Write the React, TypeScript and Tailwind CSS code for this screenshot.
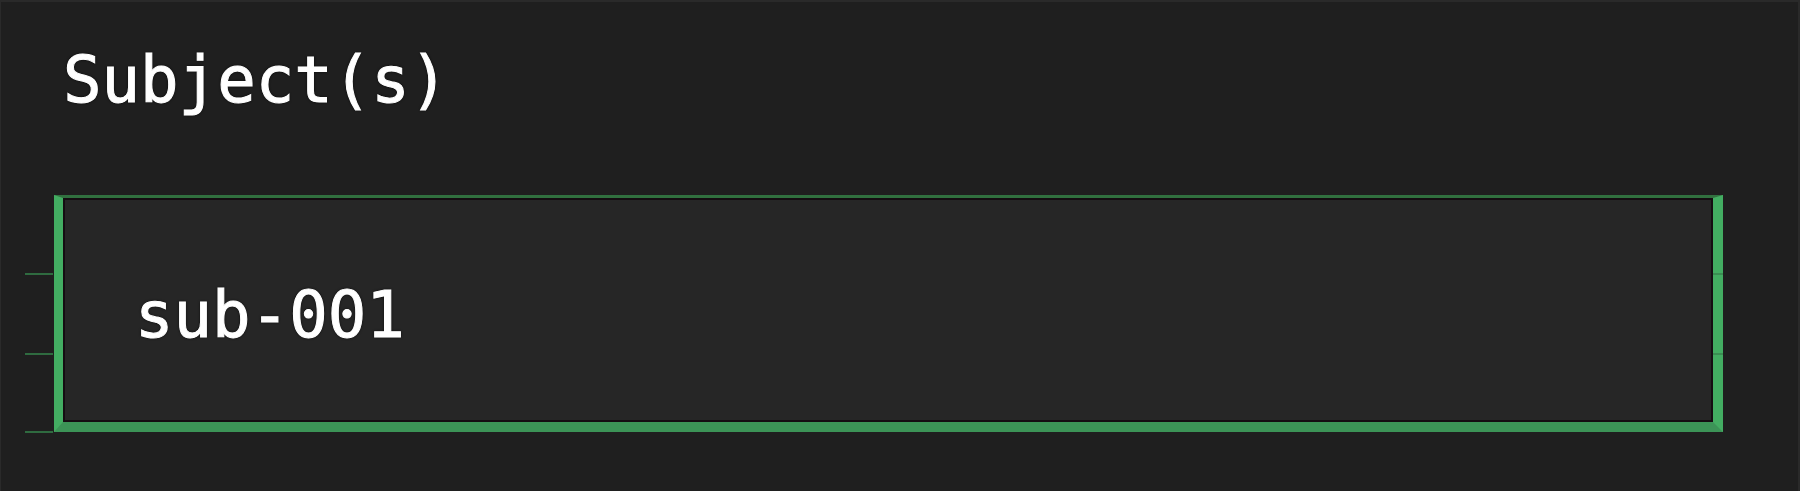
export default function App() {
  return (
    <div className="w-full h-[491px] bg-[#1f1f1f] border-t-2 border-l border-r-2 border-[#2a2a2a] font-['DejaVu_Sans_Mono',monospace] text-white overflow-hidden">
      {/* Label */}
      <div className="pt-[46px] pl-[62px] text-[64px] leading-none [-webkit-text-stroke:1px_white] [text-shadow:0_0_3px_#000]">
        Subject(s)
      </div>

      {/* Field */}
      <div className="relative mt-[83px] ml-[53px] w-[1669px] h-[237px] border-t-[3px] border-l-[9px] border-r-[10px] border-b-[10px] border-t-[#31703f] border-l-[#43ad62] border-r-[#43ad62] border-b-[#3c9457]">
        <div className="h-full border-2 border-[#150d12] bg-[#262626] pt-[83px] pl-[70px] text-[64px] leading-none [-webkit-text-stroke:1px_white] [text-shadow:0_0_3px_#000]">
          sub-001
        </div>

        {/* focus ticks */}
        <span className="absolute left-[-38px] top-[75px] w-[28px] h-[2px] bg-[#2f6b40]" />
        <span className="absolute left-[-38px] top-[155px] w-[28px] h-[2px] bg-[#2f6b40]" />
        <span className="absolute left-[-38px] top-[233px] w-[28px] h-[2px] bg-[#2f6b40]" />
        <span className="absolute right-[-10px] top-[75px] w-[10px] h-[2px] bg-[#3a8e52]" />
        <span className="absolute right-[-10px] top-[155px] w-[10px] h-[2px] bg-[#3a8e52]" />
      </div>
    </div>
  );
}
